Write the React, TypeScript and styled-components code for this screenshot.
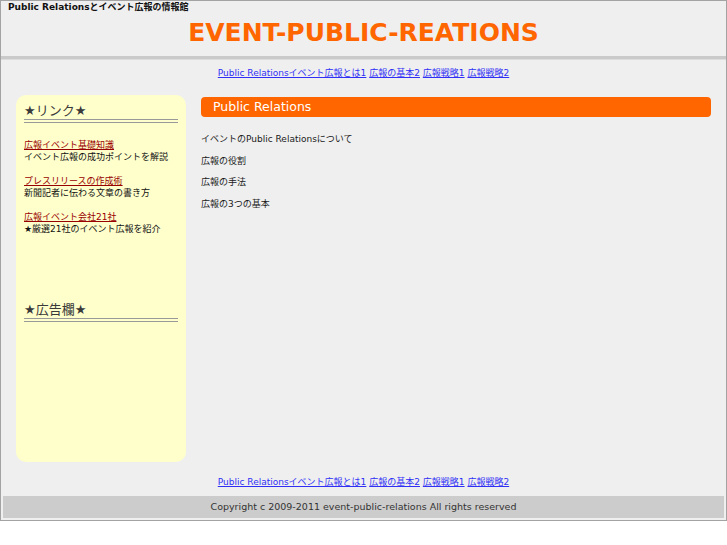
import styled, { createGlobalStyle } from "styled-components";

const FONT = `"DejaVu Sans", "Noto Sans CJK JP", sans-serif`;

const GlobalStyle = createGlobalStyle`
  body {
    margin: 0;
    background: #ffffff;
    font-family: ${FONT};
    color: #111;
  }
`;

const Page = styled.div`
  border: 1px solid #a3a3a3;
  background: #efefef;
`;

const Header = styled.header`
  padding-bottom: 8px;
  border-bottom: 3px solid #cacaca;
  box-shadow: 0 1px 0 #dddddd;
`;

const Tagline = styled.h2`
  margin: 0;
  padding-left: 7px;
  font-size: 9px;
  line-height: 13px;
  font-weight: bold;
  color: #111;
`;

const SiteTitle = styled.h1`
  margin: 4px 0 0;
  font-size: 25px;
  line-height: 30px;
  font-weight: bold;
  color: #ff6600;
  text-align: center;
`;

const NavBar = styled.nav<{ $place: "top" | "bottom" }>`
  text-align: center;
  font-size: 9px;
  line-height: 14px;
  padding: ${(p) => (p.$place === "top" ? "7px 0 0" : "13px 0 7px")};

  a {
    color: #2f2ff5;
    text-decoration: underline;
  }
`;

const Columns = styled.div`
  display: flex;
  align-items: flex-start;
  gap: 15px;
  padding: 15px 15px 0;
`;

const Sidebar = styled.aside`
  width: 170px;
  height: 367px;
  box-sizing: border-box;
  padding: 8px;
  background: #ffffcc;
  border-radius: 10px;
`;

const SideHeading = styled.h3`
  margin: 0;
  font-size: 13px;
  line-height: 16px;
  font-weight: normal;
  color: #3a3a3a;
  border-bottom: 4px double #999;
`;

const LinkList = styled.ul`
  list-style: none;
  margin: 0;
  padding: 16px 0 55px;
`;

const SideItem = styled.li`
  margin-bottom: 12px;
  font-size: 9px;
  line-height: 12px;
`;

const ItemLink = styled.a`
  display: block;
  color: #990000;
  text-decoration: underline;
`;

const ItemText = styled.div`
  color: #111;
  white-space: nowrap;
`;

const Main = styled.main`
  flex: 1;
  margin-top: 2px;
`;

const MainHeading = styled.h2`
  margin: 0;
  height: 20px;
  padding-left: 12px;
  font-size: 12.5px;
  line-height: 20px;
  font-weight: normal;
  color: #fff;
  background: #ff6600;
  border-radius: 4px;
`;

const Body = styled.div`
  padding-top: 15px;
`;

const Para = styled.p`
  margin: 0 0 7.5px;
  font-size: 9px;
  line-height: 14px;
  color: #1a1a1a;
`;

const Footer = styled.footer`
  margin: 0 2px 2px;
  height: 22px;
  background: #cccccc;
  font-size: 9.5px;
  line-height: 22px;
  color: #333;
  text-align: center;
`;

const navLinks = [
  "Public Relationsイベント広報とは1",
  "広報の基本2",
  "広報戦略1",
  "広報戦略2",
];

const sideLinks = [
  { title: "広報イベント基礎知識", text: "イベント広報の成功ポイントを解説" },
  { title: "プレスリリースの作成術", text: "新聞記者に伝わる文章の書き方" },
  { title: "広報イベント会社21社", text: "★厳選21社のイベント広報を紹介" },
];

function Nav({ place }: { place: "top" | "bottom" }) {
  return (
    <NavBar $place={place}>
      {navLinks.map((label, i) => (
        <span key={label}>
          {i > 0 && " "}
          <a href="#">{label}</a>
        </span>
      ))}
    </NavBar>
  );
}

export default function App() {
  return (
    <>
      <GlobalStyle />
      <Page>
        <Header>
          <Tagline>Public Relationsとイベント広報の情報館</Tagline>
          <SiteTitle>EVENT-PUBLIC-REATIONS</SiteTitle>
        </Header>
        <Nav place="top" />
        <Columns>
          <Sidebar>
            <SideHeading>★リンク★</SideHeading>
            <LinkList>
              {sideLinks.map((item) => (
                <SideItem key={item.title}>
                  <ItemLink href="#">{item.title}</ItemLink>
                  <ItemText>{item.text}</ItemText>
                </SideItem>
              ))}
            </LinkList>
            <SideHeading>★広告欄★</SideHeading>
          </Sidebar>
          <Main>
            <MainHeading>Public Relations</MainHeading>
            <Body>
              <Para>イベントのPublic Relationsについて</Para>
              <Para>広報の役割</Para>
              <Para>広報の手法</Para>
              <Para>広報の3つの基本</Para>
            </Body>
          </Main>
        </Columns>
        <Nav place="bottom" />
        <Footer>Copyright c 2009-2011 event-public-relations All rights reserved</Footer>
      </Page>
    </>
  );
}
